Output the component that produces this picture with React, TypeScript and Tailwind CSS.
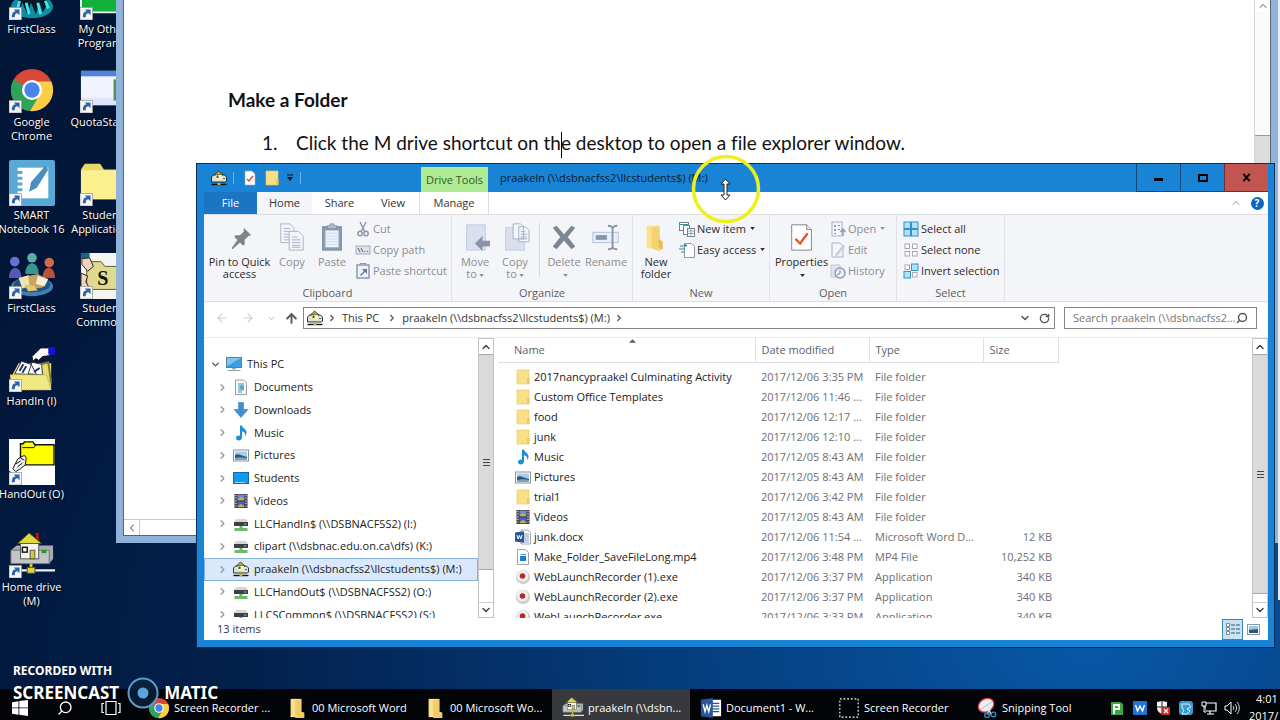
import React from 'react';
import { ChevronDown, ChevronRight, ChevronUp, ArrowLeft, ArrowRight, ArrowUp, RotateCw, Search } from 'lucide-react';

type IconName =
  | 'folder'
  | 'music'
  | 'pictures'
  | 'videos'
  | 'docx'
  | 'mp4'
  | 'exe'
  | 'pc'
  | 'documents'
  | 'downloads'
  | 'desktop'
  | 'netdrive'
  | 'house';

interface FileRow {
  name: string;
  date: string;
  type: string;
  size?: string;
  icon: IconName;
}

interface TreeRow {
  label: string;
  icon: IconName;
  selected?: boolean;
}

const files: FileRow[] = [
  { name: '2017nancypraakel Culminating Activity', date: '2017/12/06 3:35 PM', type: 'File folder', icon: 'folder' },
  { name: 'Custom Office Templates', date: '2017/12/06 11:46 ...', type: 'File folder', icon: 'folder' },
  { name: 'food', date: '2017/12/06 12:17 ...', type: 'File folder', icon: 'folder' },
  { name: 'junk', date: '2017/12/06 12:10 ...', type: 'File folder', icon: 'folder' },
  { name: 'Music', date: '2017/12/05 8:43 AM', type: 'File folder', icon: 'music' },
  { name: 'Pictures', date: '2017/12/05 8:43 AM', type: 'File folder', icon: 'pictures' },
  { name: 'trial1', date: '2017/12/06 3:42 PM', type: 'File folder', icon: 'folder' },
  { name: 'Videos', date: '2017/12/05 8:43 AM', type: 'File folder', icon: 'videos' },
  { name: 'junk.docx', date: '2017/12/06 11:54 ...', type: 'Microsoft Word D...', size: '12 KB', icon: 'docx' },
  { name: 'Make_Folder_SaveFileLong.mp4', date: '2017/12/06 3:48 PM', type: 'MP4 File', size: '10,252 KB', icon: 'mp4' },
  { name: 'WebLaunchRecorder (1).exe', date: '2017/12/06 3:37 PM', type: 'Application', size: '340 KB', icon: 'exe' },
  { name: 'WebLaunchRecorder (2).exe', date: '2017/12/06 3:37 PM', type: 'Application', size: '340 KB', icon: 'exe' },
  { name: 'WebLaunchRecorder.exe', date: '2017/12/06 3:33 PM', type: 'Application', size: '340 KB', icon: 'exe' },
];

const tree: TreeRow[] = [
  { label: 'Documents', icon: 'documents' },
  { label: 'Downloads', icon: 'downloads' },
  { label: 'Music', icon: 'music' },
  { label: 'Pictures', icon: 'pictures' },
  { label: 'Students', icon: 'desktop' },
  { label: 'Videos', icon: 'videos' },
  { label: 'LLCHandIn$ (\\\\DSBNACFSS2) (I:)', icon: 'netdrive' },
  { label: 'clipart (\\\\dsbnac.edu.on.ca\\dfs) (K:)', icon: 'netdrive' },
  { label: 'praakeln (\\\\dsbnacfss2\\llcstudents$) (M:)', icon: 'house', selected: true },
  { label: 'LLCHandOut$ (\\\\DSBNACFSS2) (O:)', icon: 'netdrive' },
  { label: 'LLCSCommon$ (\\\\DSBNACFSS2) (S:)', icon: 'netdrive' },
];

/* ---------- 16px icons ---------- */

const SmallIcon = ({ name }: { name: IconName }) => (
  <svg viewBox="0 0 16 16" className="w-4 h-4 shrink-0" aria-hidden="true">
    {name === 'folder' && (
      <>
        <path d="M2 1h12v14H2z" fill="#f9df86" stroke="#e6c766" strokeWidth="0.6" />
        <path d="M12 9h2.500v6H12z" fill="#ecca62" />
      </>
    )}
    {name === 'music' && (
      <path d="M7 0.500h2c0.300 2.500 4.500 3.500 4.500 7 0 1.800-0.800 2.800-1.500 3.500 0.800-3-1-4.300-3-4.800V12.500c0 1.800-1.600 3-3.300 3S3 14.500 3 13s1.500-2.700 4-2.300z" fill="#1c8fd8" />
    )}
    {name === 'pictures' && (
      <>
        <rect x="0.500" y="3" width="15" height="11" fill="#fff" stroke="#8e9299" />
        <rect x="2" y="4.500" width="12" height="8" fill="#a8cdea" />
        <path d="M2 8c3-2 5 0 12 2v2.500H2z" fill="#2c587c" />
        <path d="M2 11c4-1 8-1 12 0v1.500H2z" fill="#7fa3b8" />
      </>
    )}
    {name === 'videos' && (
      <>
        <rect x="1.500" y="1" width="13" height="14" fill="#3b3b45" />
        <rect x="4.500" y="1.500" width="7" height="6" fill="#7089c9" />
        <rect x="4.500" y="8.500" width="7" height="6" fill="#4d66b0" />
        <path d="M5 6l3-2 3 2v1H5zM5 13l3-2 3 2v1H5z" fill="#c9b04a" />
        <path d="M3 2v13M13 2v13" stroke="#e8e8e8" strokeWidth="1.200" strokeDasharray="1.200 1.400" />
      </>
    )}
    {name === 'docx' && (
      <>
        <path d="M6 1h7l2.500 2.500V15H6z" fill="#fff" stroke="#8a8f98" strokeWidth="0.800" />
        <path d="M9 5h5M9 7h5M9 9h5M9 11h5M9 13h5" stroke="#6b87b8" strokeWidth="0.800" />
        <path d="M0 3.500l9-1.200v11.400L0 12.500z" fill="#2b579a" />
        <path d="M2 6l1.200 4L4.500 6.500 5.800 10 7 6" fill="none" stroke="#fff" />
      </>
    )}
    {name === 'mp4' && (
      <>
        <path d="M2.500 0.500h8l3 3v12h-11z" fill="#fff" stroke="#8a8f98" strokeWidth="0.800" />
        <rect x="5" y="7" width="6" height="5" fill="#1d7fd1" />
        <path d="M5 5.500l6-0.800V6H5z" fill="#3b96dd" />
      </>
    )}
    {name === 'exe' && (
      <>
        <circle cx="8" cy="8" r="7.200" fill="#d0cdcd" />
        <circle cx="7.500" cy="6.800" r="5.800" fill="#f0eeee" />
        <circle cx="7.500" cy="7" r="2.800" fill="#b32a2e" />
      </>
    )}
    {name === 'pc' && (
      <>
        <rect x="0.500" y="1.500" width="15" height="10" fill="#3d9fdc" stroke="#5d7f98" />
        <path d="M1 2h14L1 10z" fill="#7cc6ef" />
        <path d="M6 12h4v1.500H6z" fill="#9bb2c0" />
        <path d="M1.500 14.500h13" stroke="#8fa7b5" />
      </>
    )}
    {name === 'documents' && (
      <>
        <path d="M2.500 1h8l3 3v11.500h-11z" fill="#f7fafc" stroke="#8a949e" strokeWidth="0.900" />
        <path d="M5 5h6M5 7h6M5 9h6M5 11h6M5 13h4" stroke="#4a93b6" />
        <rect x="7" y="6.500" width="4" height="4" fill="#5aa9cb" />
      </>
    )}
    {name === 'downloads' && <path d="M5.500 0.500h5v7h4.500L8 15.500 1 7.500h4.500z" fill="#3d8fd1" stroke="#2f79b8" strokeWidth="0.500" />}
    {name === 'desktop' && (
      <>
        <rect x="0.500" y="2.500" width="15" height="11" fill="#0c9bf0" stroke="#1468a8" />
        <path d="M2 12.500h10" stroke="#bfe4fb" strokeWidth="0.800" />
      </>
    )}
    {name === 'netdrive' && (
      <>
        <path d="M3 3h10l2 3H1z" fill="#d6d6d6" />
        <rect x="1" y="6" width="14" height="4" fill="#3c4044" />
        <rect x="11" y="7.500" width="2.500" height="1" fill="#56e07a" />
        <path d="M6.500 10h3v2h5v3h-13v-3h5z" fill="#6fb96f" />
      </>
    )}
    {name === 'house' && (
      <>
        <path d="M0.500 7l2-2h11l2 2v4l-1 1H0.500z" fill="#deded2" stroke="#222" strokeWidth="0.900" />
        <path d="M3.500 5L7.500 1l4.500 4z" fill="#b9b53a" stroke="#222" strokeWidth="0.800" />
        <rect x="4.500" y="5" width="6.500" height="4.500" fill="#f4f0c0" />
        <path d="M5.500 5.500h2v2.500h-2z" fill="#44602c" />
        <path d="M12 8.500h2" stroke="#2a8a3a" />
        <path d="M0.500 14.500h15" stroke="#111" strokeWidth="1.400" />
        <rect x="6.500" y="13" width="3" height="2" fill="#c8b820" />
      </>
    )}
  </svg>
);

/* ---------- desktop icons ---------- */

const ChromeLogo = () => (
  <>
    <circle cx="24" cy="24" r="22" fill="#d9483b" />
    <path d="M24 24L5 13A22 22 0 0 0 22 46l10-17z" fill="#2fa35a" />
    <path d="M24 24l8 5-10 17A22 22 0 0 0 44 15H24z" fill="#f8cf45" />
    <circle cx="24" cy="24" r="10.500" fill="#fff" />
    <circle cx="24" cy="24" r="8" fill="#4a83ec" />
  </>
);

const HouseDrive = () => (
  <>
    <path d="M2 19l6-5h38v14l-4 5H2z" fill="#a9abad" />
    <path d="M2 19h40v14H2z" fill="#c2c4c6" stroke="#6e7072" />
    <rect x="34" y="19" width="5" height="3" fill="#119c2c" />
    <path d="M28 1h3v8h-3z" fill="#b81818" />
    <path d="M9 12L21 1l13 11z" fill="#ded93c" stroke="#50501a" />
    <rect x="12" y="12" width="19" height="16" fill="#f4f4ee" stroke="#555" />
    <rect x="14" y="16" width="5" height="5" fill="#fff" stroke="#111" strokeWidth="1.500" />
    <rect x="22" y="19" width="5" height="9" fill="#d8c82c" stroke="#555" />
    <path d="M23 33v6" stroke="#d8c82c" strokeWidth="3" />
    <path d="M3 40h45" stroke="#f2f2f2" strokeWidth="2.500" />
    <rect x="19" y="37" width="8" height="6" fill="#e2d42c" stroke="#555" />
  </>
);

const People = () => (
  <>
    <ellipse cx="24" cy="35" rx="22" ry="10" fill="#3f7fb4" />
    <ellipse cx="24" cy="33" rx="19" ry="8" fill="#22527e" />
    <circle cx="6" cy="9" r="5" fill="#6b6fd0" />
    <path d="M0 26c0-14 13-14 13 0z" fill="#5558b8" />
    <circle cx="24" cy="5" r="5" fill="#58b0ac" />
    <path d="M17 22c0-15 14-15 14 0z" fill="#3c948f" />
    <circle cx="42" cy="10" r="5" fill="#cf6a4c" />
    <path d="M35 26c0-14 13-14 13 0z" fill="#b65238" />
    <path d="M10 26l11-3 3 11-10 3z" fill="#efe4b2" />
    <path d="M20 24l10-2 8 4-3 10-13 2z" fill="#c9a45c" />
    <path d="M30 24l11 3-4 8-9-3z" fill="#f3efdc" />
    <path d="M16 33l10 1 4 5-10 1z" fill="#e4c873" />
  </>
);

const desktopArt: Record<string, React.ReactNode> = {
  first: (
    <>
      <ellipse cx="24" cy="34" rx="22" ry="12" fill="#0d8fa0" />
      <path d="M8 10l6 5 5-5 5 5 5-5 5 5 6-5v22l-5 8-3-10-4 12-5-12-4 12-5-12-4 10z" fill="#071a26" />
      <path d="M18 30l3 12M30 30l3 12M11 28l-2 9M38 28l3 8" stroke="#4be3ef" strokeWidth="3" />
    </>
  ),
  green: <path d="M1 0h47v40H1z" fill="#13b13a" stroke="#e8f4e8" strokeWidth="2" />,
  chrome: <ChromeLogo />,
  quota: (
    <>
      <rect x="1" y="4" width="47" height="36" fill="#dfe5fa" />
      <rect x="1" y="4" width="47" height="6" fill="#4f83e0" />
      <path d="M1 10h47v22H1z" fill="#f1f3fd" />
      <rect x="35" y="13" width="13" height="22" fill="#5d8c5a" />
    </>
  ),
  smart: (
    <>
      <rect x="0" y="0" width="48" height="48" rx="2" fill="#59a9d6" />
      <path d="M9 8h32v32H9z" fill="#fff" />
      <path d="M8 13h6M8 19h6M8 25h6M8 31h6" stroke="#59a9d6" strokeWidth="3" />
      <path d="M38 6l3 4-12 19-8 4 2-10z" fill="#4a8fbd" />
    </>
  ),
  folder: (
    <>
      <path d="M1 10l4-6h16l4 6h23v31H1z" fill="#e9d864" />
      <path d="M1 12h47v29H1z" fill="#fbf08d" />
      <path d="M1 11.500h47" stroke="#fffbd2" />
    </>
  ),
  people: <People />,
  common: (
    <>
      <rect x="1" y="0" width="47" height="48" fill="#f4f4f0" />
      <path d="M7 13l5-4h10l4 5h22v24H7z" fill="#dfda8e" stroke="#5a5636" />
      <path d="M1 0h9v6H1z" fill="#17658c" />
      <path d="M2 6l8-1 4 9-6 5-6-7z" fill="#f0d3bd" stroke="#2a2018" />
      <path d="M1 21l7 3-2 6 4 7H1z" fill="#f0d3bd" stroke="#2a2018" />
      <text x="18" y="33" fontSize="21" fontWeight="bold" fontFamily="Liberation Serif, serif" fill="#111">S</text>
    </>
  ),
  handin: (
    <>
      <path d="M3 31l7-13h34v28H3z" fill="#e6dd72" />
      <path d="M6 29l7-13 10 3 6 11zM20 29l4-12 10 2 1 11z" fill="#fff" stroke="#333" />
      <path d="M11 26l4-7M14 28l4-7M26 27l6-4" stroke="#222a70" strokeWidth="2" />
      <path d="M33 19l8-2 3 22" fill="none" stroke="#807a30" strokeWidth="2" />
      <path d="M1 30h38l5 16H3z" fill="#f1e883" stroke="#a69d40" strokeDasharray="1 1" />
      <path d="M24 11l9-9h10v8l-8 1-4 4-3-2-3 3z" fill="#f8f8f8" stroke="#111" />
      <rect x="41" y="1" width="7" height="8" fill="#1212d8" />
    </>
  ),
  handout: (
    <>
      <rect x="0" y="0" width="48" height="48" fill="#fff" />
      <path d="M12 5h3l1-2h9l2 3h20v21H12z" fill="#ff0" stroke="#111" strokeWidth="1.500" />
      <path d="M14 9h12l2-3" fill="none" stroke="#111" />
      <path d="M16 17l-7 4-5 10 3 3 5-3 5-4 1-7z" fill="#eee" stroke="#111" />
      <path d="M7 26l5-3M9 29l5-4M12 20l4 2" stroke="#111" />
      <path d="M0 33l5 3-5 3z" fill="#1a1ac0" />
    </>
  ),
  house: <HouseDrive />,
};

const desktopIcons = [
  { art: 'first', label: 'FirstClass' },
  { art: 'green', label: 'My Other Programs' },
  { art: 'chrome', label: 'Google Chrome' },
  { art: 'quota', label: 'QuotaStatus' },
  { art: 'smart', label: 'SMART Notebook 16' },
  { art: 'folder', label: 'Student Applications' },
  { art: 'people', label: 'FirstClass' },
  { art: 'common', label: 'Student Commons' },
  { art: 'handin', label: 'HandIn (I)' },
  null,
  { art: 'handout', label: 'HandOut (O)' },
  null,
  { art: 'house', label: 'Home drive (M)' },
];

const DesktopIcons = () => (
  <div className="absolute left-0 top-0 -ml-1 -mt-[26px] grid grid-cols-[71px_71px] auto-rows-[93px]">
    {desktopIcons.map((item, i) =>
      item ? (
        <button key={i} className="flex flex-col items-center text-[11px] leading-[14px] text-white">
          <svg viewBox="0 0 48 48" className="w-[46px] h-[46px] shrink-0" aria-hidden="true">
            {desktopArt[item.art]}
            <rect x="0" y="35" width="13" height="13" fill="#f5f5f5" stroke="#9a9a9a" strokeWidth="0.800" />
            <path d="M3 45c0-4 1-6 4-6l-2-2h6v6l-2-2c-2 0-3 1-3 4z" fill="#2e62a8" />
          </svg>
          <span className="mt-[2px] [text-shadow:1px_1px_2px_#000]">{item.label}</span>
        </button>
      ) : (
        <div key={i} />
      )
    )}
  </div>
);

/* ---------- Word window behind the explorer ---------- */

const WordWindow = () => (
  <section className="absolute left-[116px] right-[2px] top-0 bottom-[177px] border-x-[7px] border-b-[7px] border-[#91b3da]">
    <div className="h-full flex flex-col border-x border-b border-[#5b6672] bg-white">
      <div className="flex-1 min-h-0 flex">
        <article className="flex-1 pl-[104px] pt-[88px] font-['Lato',sans-serif] text-[19px] leading-6 text-[#111] [font-variant-ligatures:none]">
          <h1 className="font-bold">Make a Folder</h1>
          <p className="mt-[19px] pl-[34px] flex">
            <span className="w-[34px]">1.</span>
            <span>
              Click the M drive shortcut on th<span className="inline-block w-px h-[26px] -mr-px align-middle bg-black" />e desktop to open a file explorer window.
            </span>
          </p>
        </article>
        <div className="w-4 flex flex-col border-l border-[#d5d5d5]">
          <button className="h-3 grid place-items-center text-[#555]" aria-label="Scroll up">
            <ChevronUp size={12} />
          </button>
          <div className="h-[124px] border-b border-[#999] bg-[#fbfbfb]" />
          <div className="h-12 bg-[#dcdcdc]" />
        </div>
      </div>
      <div className="h-4 flex border-t border-[#c8c8c8]">
        <button className="w-4 grid place-items-center border-r border-[#c8c8c8] text-[#444]" aria-label="Scroll left">
          <ChevronRight size={12} className="rotate-180" />
        </button>
      </div>
    </div>
  </section>
);

/* ---------- ribbon ---------- */

const bigArt: Record<string, React.ReactNode> = {
  pin: (
    <g fill="#808488">
      <path d="M20 6l8 8-3 1-4 4v5l-2 1-9-9 1-2h5l4-4z" />
      <path d="M14 18l3 3-9 8-1-1z" />
    </g>
  ),
  copy: (
    <g fill="#f3f5fa" stroke="#a9b2c3">
      <path d="M4 2h10l4 4v16H4z" />
      <path d="M7 7h7M7 10h8M7 13h9M7 16h9M7 19h9" />
      <path d="M13 10h10l5 5v15H13z" />
      <path d="M16 16h6M16 19h9M16 22h9M16 25h9M16 27h9" />
    </g>
  ),
  paste: (
    <g>
      <rect x="6" y="5" width="20" height="25" fill="#8a9cb5" stroke="#77879f" />
      <rect x="9" y="9" width="14" height="18" fill="#eef3fc" />
      <path d="M10 12h12M10 15h12M10 18h12M10 21h12M10 24h12" stroke="#cdd8ec" />
      <path d="M11 7V4h3V2h4v2h3v3z" fill="#b4bcc8" stroke="#8893a5" />
    </g>
  ),
  moveto: (
    <g>
      <path d="M7 3h20v27H7z" fill="#dadff0" stroke="#c5cce2" />
      <path d="M24 15l-8 8 8 8v-5h8v-6h-8z" fill="#8b93a5" />
    </g>
  ),
  copyto: (
    <g>
      <path d="M6 6h20v24H6z" fill="#dadff0" stroke="#c5cce2" />
      <path d="M14 2h8l3 3v13H14zM20 5h7l4 4v12H20z" fill="#f4f6fb" stroke="#a4aec2" />
      <path d="M22 10h5M22 13h7M22 16h7M22 18h7" stroke="#a4aec2" />
    </g>
  ),
  del: <path d="M4 6l4-2 8 9 8-9 4 2-8 10 8 10-4 3-8-9-8 9-4-3 8-10z" fill="#7d8794" />,
  rename: (
    <g>
      <rect x="2" y="11" width="27" height="11" fill="#e9effa" stroke="#b2c0d8" />
      <rect x="5" y="14" width="12" height="5" fill="#8394b0" />
      <path d="M18 4c4 0 5 2 5 3 0-1 2-3 5-3M23 7v20M18 29c4 0 5-1 5-3 0 2 2 3 5 3" fill="none" stroke="#8893a5" strokeWidth="2" />
    </g>
  ),
  newfolder: (
    <g>
      <path d="M6 4h13v24H6z" fill="#fbe08a" />
      <path d="M11 6l9-2v14l3 3v8l-4 2-8-3z" fill="#f5d271" />
      <path d="M19 18l4 3v8l-4-2z" fill="#e8bd54" />
    </g>
  ),
  props: (
    <g>
      <path d="M5 3h16l5 5v22H5z" fill="#fff" stroke="#7c8088" />
      <path d="M21 3v5h5" fill="#e8e8ee" stroke="#7c8088" />
      <path d="M9 18l5 5 8-11" fill="none" stroke="#e4552b" strokeWidth="2.500" />
    </g>
  ),
};

const smallArt: Record<string, React.ReactNode> = {
  cut: (
    <g fill="none" stroke="#8b95a8" strokeWidth="1.400">
      <path d="M5 1l5 10M11 1L6 11" />
      <circle cx="5" cy="12.500" r="2.200" />
      <circle cx="11" cy="12.500" r="2.200" />
    </g>
  ),
  path: (
    <g>
      <rect x="1" y="4" width="14" height="8" fill="#dce1ea" stroke="#a5adba" />
      <path d="M3 6l2 4M6 6l2 4M9.500 9.500h1M12 9.500h1" stroke="#586274" />
    </g>
  ),
  shortcut: (
    <g>
      <rect x="2" y="2" width="12" height="13" fill="#eef2f9" stroke="#8b9ab2" strokeWidth="1.500" />
      <path d="M5 2V0.500h6V2" stroke="#8b9ab2" fill="none" />
      <path d="M5 12l4-4-2-2h5v5l-2-2-4 4z" fill="#63779b" />
    </g>
  ),
  newitem: (
    <g fill="#fff" stroke="#6e8798">
      <rect x="0.500" y="1.500" width="9" height="8" />
      <path d="M0.500 3.500h9" stroke="#3c8c9a" />
      <rect x="4.500" y="4.500" width="6" height="9" />
      <rect x="8.500" y="7.500" width="7" height="8" />
      <path d="M8.500 10h7M8.500 12.500h7M12 8v7" strokeWidth="0.700" />
    </g>
  ),
  easy: (
    <g>
      <path d="M5.500 1.500h7l3 3v11h-10z" fill="#fff" stroke="#8a97a6" />
      <path d="M1 4h6M0 7h6M2 10h4M5 2l3 2" stroke="#2e8a9c" strokeWidth="1.200" />
    </g>
  ),
  open: (
    <g>
      <rect x="2" y="1" width="10" height="14" fill="#f2f5fb" stroke="#aab4c6" />
      <path d="M4 4h2v2H4zM4 8h2v2H4zM4 12h2v1H4zM8 4h2v1H8zM8 8h2v1H8z" fill="#8c9ab4" />
      <path d="M13 15V9M10.500 11L13 8l2.500 3" stroke="#8c9ab4" strokeWidth="1.500" fill="none" />
    </g>
  ),
  edit: (
    <g>
      <path d="M2 1h8l3 3v11H2z" fill="#f2f5fb" stroke="#aab4c6" />
      <path d="M5 13l8-10 2 1-8 10z" fill="#c2cada" />
    </g>
  ),
  history: (
    <g>
      <path d="M1 2h9v12H1z" fill="#dfe4f0" stroke="#bcc5d8" />
      <circle cx="10" cy="10" r="5" fill="#eef2f9" stroke="#8c9ab4" strokeWidth="1.500" />
      <path d="M10 7v3.500L7 12" stroke="#6f7f9b" fill="none" />
    </g>
  ),
  all: (
    <g fill="#b5e0f7" stroke="#2f93cc">
      <rect x="1" y="1" width="6.500" height="6.500" />
      <rect x="8.500" y="1" width="6.500" height="6.500" />
      <rect x="1" y="8.500" width="6.500" height="6.500" />
      <rect x="8.500" y="8.500" width="6.500" height="6.500" />
    </g>
  ),
  none: (
    <g fill="#fff" stroke="#a8a8ae">
      <rect x="2" y="2" width="4.500" height="4.500" />
      <rect x="9.500" y="2" width="4.500" height="4.500" />
      <rect x="2" y="9.500" width="4.500" height="4.500" />
      <rect x="9.500" y="9.500" width="4.500" height="4.500" />
    </g>
  ),
  invert: (
    <g fill="#b5e0f7" stroke="#2f93cc">
      <rect x="2" y="2" width="4.500" height="4.500" fill="#fff" stroke="#a8a8ae" />
      <rect x="8.500" y="1" width="6.500" height="6.500" />
      <rect x="1" y="8.500" width="6.500" height="6.500" />
      <rect x="9.500" y="9.500" width="4.500" height="4.500" fill="#fff" stroke="#a8a8ae" />
    </g>
  ),
};

const Caret = () => (
  <svg viewBox="0 0 6 4" className="inline-block w-[5px] h-[3px] ml-[2px] shrink-0" aria-hidden="true">
    <path d="M0 0h6L3 4z" fill="currentColor" />
  </svg>
);

interface RibbonButtonProps {
  art: string;
  label: string;
  width?: string;
  disabled?: boolean;
  caret?: boolean;
}

const BigButton = ({ art, label, width = 'w-10', disabled, caret }: RibbonButtonProps) => (
  <button className={`${width} shrink-0 flex flex-col items-center leading-3 ${disabled ? 'text-[#8c8c90]' : 'text-[#2a2a2e]'}`}>
    <svg viewBox="0 0 32 32" className="w-[30px] h-[30px] mt-[7px] mb-1 shrink-0" aria-hidden="true">
      {bigArt[art]}
    </svg>
    <span className="whitespace-pre-line">
      {label}
      {caret && <Caret />}
    </span>
  </button>
);

const SmallButton = ({ art, label, disabled, caret }: RibbonButtonProps) => (
  <button className={`h-[21px] flex items-center gap-[2px] whitespace-nowrap ${disabled ? 'text-[#8c8c90]' : 'text-[#2a2a2e]'}`}>
    <svg viewBox="0 0 16 16" className="w-4 h-4 shrink-0" aria-hidden="true">
      {smallArt[art]}
    </svg>
    {label}
    {caret && <Caret />}
  </button>
);

const Group = ({ title, width, children }: { title: string; width: string; children: React.ReactNode }) => (
  <div className={`${width} shrink-0 flex flex-col border-r border-[#e1e2e5]`}>
    <div className="flex-1 flex pl-[3px]">{children}</div>
    <div className="h-[15px] text-center text-[#5c5c62]">{title}</div>
  </div>
);

const Ribbon = () => (
  <div className="h-[88px] flex bg-[#f4f5f8] border-y border-[#dcdde0]">
    <Group title="Clipboard" width="w-[248px]">
      <BigButton art="pin" label="Pin to Quick access" width="w-[65px]" />
      <BigButton art="copy" label="Copy" disabled />
      <BigButton art="paste" label="Paste" disabled />
      <div className="pl-[3px] pt-[3px]">
        <SmallButton art="cut" label="Cut" disabled />
        <SmallButton art="path" label="Copy path" disabled />
        <SmallButton art="shortcut" label="Paste shortcut" disabled />
      </div>
    </Group>
    <Group title="Organize" width="w-[181px]">
      <BigButton art="moveto" label={'Move\nto'} disabled caret />
      <BigButton art="copyto" label={'Copy\nto'} disabled caret />
      <div className="w-px h-[54px] mt-2 mx-1 bg-[#d8d9dd]" />
      <BigButton art="del" label={'Delete\n'} disabled caret />
      <BigButton art="rename" label="Rename" width="w-11" disabled />
    </Group>
    <Group title="New" width="w-[137px]">
      <BigButton art="newfolder" label="New folder" />
      <div className="pl-[3px] pt-[3px]">
        <SmallButton art="newitem" label="New item" caret />
        <SmallButton art="easy" label="Easy access" caret />
      </div>
    </Group>
    <Group title="Open" width="w-[127px]">
      <BigButton art="props" label={'Properties\n'} width="w-[57px]" caret />
      <div className="pt-[3px]">
        <SmallButton art="open" label="Open" disabled caret />
        <SmallButton art="edit" label="Edit" disabled />
        <SmallButton art="history" label="History" disabled />
      </div>
    </Group>
    <Group title="Select" width="w-[108px]">
      <div className="pl-[3px] pt-[3px]">
        <SmallButton art="all" label="Select all" />
        <SmallButton art="none" label="Select none" />
        <SmallButton art="invert" label="Invert selection" />
      </div>
    </Group>
  </div>
);

/* ---------- explorer ---------- */

const TitleBar = () => (
  <header className="h-7 flex items-center text-[#0a1a2c]">
    <div className="w-[217px] pl-[7px] flex items-center gap-[6px]">
      <SmallIcon name="house" />
      <span className="w-px h-3 mr-[2px] bg-[#6bb0e8]" />
      <svg viewBox="0 0 16 16" className="w-4 h-4" aria-hidden="true">
        <path d="M3 1h7l3 3v11H3z" fill="#fff" stroke="#a9a9b0" strokeWidth="0.600" />
        <path d="M5 9l2 2 4-5" fill="none" stroke="#dd4a35" strokeWidth="1.500" />
      </svg>
      <SmallIcon name="folder" />
      <svg viewBox="0 0 8 8" className="w-2 h-2" aria-hidden="true">
        <path d="M1 1h6" stroke="#111" />
        <path d="M1 3h6L4 7z" fill="#111" />
      </svg>
      <span className="w-px h-3 bg-[#6bb0e8]" />
    </div>
    <div className="w-[67px] h-[25px] self-end grid place-items-center bg-[#aeea92] text-[#37562c]">Drive Tools</div>
    <h2 className="flex-1 pl-3">praakeln (\\dsbnacfss2\llcstudents$) (M:)</h2>
    <button className="w-11 h-7 grid place-items-center border-l border-b border-[#0f4778]" aria-label="Minimize">
      <span className="w-[9px] h-[3px] mt-[3px] bg-black" />
    </button>
    <button className="w-11 h-7 grid place-items-center border-l border-b border-[#0f4778]" aria-label="Maximize">
      <span className="w-[10px] h-2 border-2 border-black" />
    </button>
    <button className="w-11 h-7 grid place-items-center border-l border-b border-[#6d3030] bg-[#c35550]" aria-label="Close">
      <svg viewBox="0 0 10 10" className="w-[9px] h-[9px]" aria-hidden="true">
        <path d="M1.500 1l7 8M8.500 1l-7 8" stroke="#000" strokeWidth="2.200" />
      </svg>
    </button>
  </header>
);

const Tabs = () => (
  <nav className="h-[22px] flex bg-white text-[#333]">
    <button className="w-[53px] bg-[#1b74c4] text-white">File</button>
    <button className="w-[55px] bg-[#f4f5f8]">Home</button>
    <button className="w-[55px]">Share</button>
    <button className="w-[52px]">View</button>
    <button className="w-[70px] border-x border-[#dcdde0]">Manage</button>
    <div className="flex-1" />
    <button className="w-6 grid place-items-center text-[#999]" aria-label="Collapse ribbon">
      <ChevronUp size={12} />
    </button>
    <button className="w-[18px] mr-[2px] grid place-items-center" aria-label="Help">
      <span className="w-[13px] h-[13px] rounded-full bg-[#0c66bd] text-white text-[10px] leading-[13px] font-bold">?</span>
    </button>
  </nav>
);

const AddressBar = () => (
  <div className="h-[35px] flex items-start gap-[9px] pt-[5px] pr-[11px] bg-white text-[#333]">
    <div className="flex-1 h-[22px] flex items-center">
      <div className="w-[99px] flex items-center pl-[11px]">
        <button className="w-[26px]" aria-label="Back"><ArrowLeft size={14} color="#cfcfcf" /></button>
        <button className="w-[26px]" aria-label="Forward"><ArrowRight size={14} color="#cfcfcf" /></button>
        <button className="w-[17px]" aria-label="Recent locations"><ChevronDown size={9} color="#9a9a9a" /></button>
        <button aria-label="Up"><ArrowUp size={15} color="#555" strokeWidth={3} /></button>
      </div>
      <div className="flex-1 h-full flex items-center border border-[#858585] pl-[3px]">
        <SmallIcon name="house" />
        <ChevronRight size={10} className="ml-1" color="#555" strokeWidth={3} />
        <button className="ml-[5px]">This PC</button>
        <ChevronRight size={10} className="ml-2" color="#555" strokeWidth={3} />
        <button className="ml-[5px]">praakeln (\\dsbnacfss2\llcstudents$) (M:)</button>
        <ChevronRight size={10} className="ml-1" color="#555" strokeWidth={3} />
        <div className="flex-1" />
        <button aria-label="Previous locations"><ChevronDown size={12} color="#555" strokeWidth={3} /></button>
        <button className="ml-2 mr-1" aria-label="Refresh"><RotateCw size={11} color="#555" strokeWidth={3} /></button>
      </div>
    </div>
    <label className="w-[193px] h-[22px] flex items-center border border-[#858585] px-2">
      <input
        type="text"
        aria-label="Search"
        placeholder="Search praakeln (\\dsbnacfss2..."
        className="flex-1 min-w-0 outline-none placeholder:text-[#767676]"
      />
      <Search size={12} color="#555" strokeWidth={3} className="-scale-x-100" />
    </label>
  </div>
);

const Scrollbar = ({ rest }: { rest: string }) => (
  <div className="w-4 shrink-0 flex flex-col border border-[#c4c4c4] bg-white text-[#444]">
    <button className="h-[15px] shrink-0 grid place-items-center" aria-label="Scroll up">
      <ChevronUp size={12} strokeWidth={3} />
    </button>
    <div className="flex-1 flex flex-col items-center justify-center gap-[2px] bg-[#dadada] border-y border-[#a8a8a8]">
      <span className="w-[7px] h-px bg-[#444]" />
      <span className="w-[7px] h-px bg-[#444]" />
      <span className="w-[7px] h-px bg-[#444]" />
    </div>
    <div className={rest} />
    <button className="h-[15px] shrink-0 grid place-items-center border-t border-[#d0d0d0]" aria-label="Scroll down">
      <ChevronDown size={12} strokeWidth={3} />
    </button>
  </div>
);

const TreePane = () => (
  <div className="w-[274px] shrink-0 overflow-hidden pt-[15px]">
    <ul className="h-[273px] grid grid-rows-12 text-[#222]">
      <li className="flex items-center gap-[5px] pl-[6px]">
        <ChevronDown size={11} color="#555" strokeWidth={3} />
        <SmallIcon name="pc" />
        This PC
      </li>
      {tree.map((row) => (
        <li
          key={row.label}
          className={`flex items-center gap-[5px] pl-3 border ${row.selected ? 'bg-[#d9e8fb] border-[#8ab0de]' : 'border-transparent'}`}
        >
          <ChevronRight size={11} color="#999" strokeWidth={3} />
          <SmallIcon name={row.icon} />
          <span className="whitespace-nowrap">{row.label}</span>
        </li>
      ))}
    </ul>
  </div>
);

const FilePane = () => (
  <div className="flex-1 overflow-hidden ml-1">
    <table className="w-[560px] table-fixed border-collapse text-[#6e6e72]">
      <thead>
        <tr className="h-6 text-left border-b border-[#dfe0e3] text-[#5a6070]">
          <th className="relative w-[257px] pl-4 font-normal border-r border-[#dfe0e3]">
            Name
            <svg viewBox="0 0 8 4" className="absolute left-[131px] top-px w-[7px] h-1" aria-hidden="true">
              <path d="M4 0l4 4H0z" fill="#555b66" />
            </svg>
          </th>
          <th className="w-[114px] pl-[6px] font-normal border-r border-[#dfe0e3]">Date modified</th>
          <th className="w-[114px] pl-[6px] font-normal border-r border-[#dfe0e3]">Type</th>
          <th className="w-[75px] pl-[6px] font-normal border-r border-[#dfe0e3]">Size</th>
        </tr>
      </thead>
      <tbody>
        <tr className="h-[5px]" />
        {files.map((file) => (
          <tr key={file.name} className="h-5 whitespace-nowrap">
            <td className="pl-[17px] text-[#1a1a1a]">
              <div className="flex items-center gap-[3px]">
                <SmallIcon name={file.icon} />
                {file.name}
              </div>
            </td>
            <td className="pl-[6px]">{file.date}</td>
            <td className="pl-[6px]">{file.type}</td>
            <td className="pr-[6px] text-right">{file.size}</td>
          </tr>
        ))}
      </tbody>
    </table>
  </div>
);

const ExplorerWindow = () => (
  <section className="absolute left-[196px] right-[5px] top-[163px] bottom-[72px] flex flex-col border border-[#0d2f55] bg-[#1983d6] pl-[7px] pr-[6px] pb-[7px] text-[11px] leading-[14px]">
    <TitleBar />
    <Tabs />
    <Ribbon />
    <AddressBar />
    <div className="flex-1 min-h-0 flex bg-white border-t border-[#ececee]">
      <TreePane />
      <Scrollbar rest="h-8 shrink-0" />
      <FilePane />
      <Scrollbar rest="h-2 shrink-0" />
    </div>
    <footer className="h-[22px] flex items-center bg-white pl-[13px] pr-1 text-[#2d3d58]">
      <span className="flex-1">13 items</span>
      <button className="w-[21px] h-[21px] grid place-items-center border border-[#3c87b0] bg-[#c6e4f5]" aria-label="Details view">
        <svg viewBox="0 0 16 14" className="w-4 h-[14px]" aria-hidden="true">
          <path d="M1.500 1.500h3v3h-3zM1.500 5.500h3v3h-3zM1.500 9.500h3v3h-3z" fill="#fff" stroke="#7c8790" />
          <path d="M6 3h4M11 3h4M6 7h4M11 7h4M6 11h4M11 11h4" stroke="#44525e" />
        </svg>
      </button>
      <button className="w-[21px] h-[21px] grid place-items-center" aria-label="Large icons view">
        <svg viewBox="0 0 13 11" className="w-[13px] h-[11px]" aria-hidden="true">
          <rect x="0.500" y="0.500" width="12" height="10" fill="#fff" stroke="#8b98a5" />
          <rect x="2" y="2" width="9" height="7" fill="#9cc6ea" />
          <path d="M2 6l9-1v4H2z" fill="#2a5470" />
        </svg>
      </button>
    </footer>
  </section>
);

/* ---------- taskbar ---------- */

const TaskFolder = () => (
  <>
    <path d="M5 2h11v20H5z" fill="#fbe08a" />
    <path d="M10 4l7-2v14l3 1v6H10z" fill="#f2cd67" />
  </>
);

const tasks: { label: string; art: React.ReactNode; active?: boolean }[] = [
  { label: 'Screen Recorder ...', art: <g transform="scale(0.5)"><ChromeLogo /></g> },
  { label: '00 Microsoft Word', art: <TaskFolder /> },
  { label: '00 Microsoft Wo...', art: <TaskFolder /> },
  { label: 'praakeln (\\\\dsbn...', art: <g transform="scale(0.5)"><HouseDrive /></g>, active: true },
  {
    label: 'Document1 - W...',
    art: (
      <>
        <path d="M11 3h12v18H11z" fill="#fff" />
        <path d="M13 7h8M13 10h8M13 13h8M13 16h8" stroke="#2b579a" strokeWidth="1.200" />
        <path d="M1 3l13-2v22L1 21z" fill="#2b579a" />
        <path d="M3.500 8l2 8 2-7 2 7 2-8" fill="none" stroke="#fff" strokeWidth="1.500" />
      </>
    ),
  },
  { label: 'Screen Recorder', art: <rect x="2" y="2" width="20" height="20" fill="none" stroke="#fff" strokeWidth="1.200" strokeDasharray="2 2" /> },
  {
    label: 'Snipping Tool',
    art: (
      <>
        <ellipse cx="11" cy="9" rx="9" ry="7" transform="rotate(-30 11 9)" fill="#f1eeee" stroke="#c8343c" strokeWidth="1.500" />
        <path d="M4 14l14-9" stroke="#c3b0b4" />
        <path d="M13 9l3 10M17 10l-5 9" stroke="#d8e4ee" strokeWidth="1.500" />
        <circle cx="12" cy="20" r="2.500" fill="none" stroke="#2e8fc9" strokeWidth="1.500" />
        <circle cx="19" cy="19" r="2.500" fill="none" stroke="#2e8fc9" strokeWidth="1.500" />
      </>
    ),
  },
];

const Tray = () => (
  <div className="flex items-center gap-[7px] shrink-0">
    <svg viewBox="0 0 16 16" className="w-4 h-4" aria-hidden="true">
      <path d="M2 2h9l3 2v11H2z" fill="#3ba549" />
      <path d="M5 14V5h5v4H6" fill="none" stroke="#fff" strokeWidth="1.800" />
    </svg>
    <svg viewBox="0 0 16 16" className="w-4 h-4" aria-hidden="true">
      <path d="M1 1h14v14H1z" fill="#2172d8" />
      <path d="M3.500 5l2 6 2.500-5 2.500 5 2-6" fill="none" stroke="#fff" strokeWidth="1.400" />
    </svg>
    <svg viewBox="0 0 16 16" className="w-4 h-4" aria-hidden="true">
      <path d="M2 2l5-1 5 1v6c0 3-3 5-5 6-3-1-5-3-5-6z" fill="#f4f4f4" />
      <path d="M7 1v13M2 7h10" stroke="#222" />
      <rect x="7" y="7" width="8" height="8" fill="#d42b26" />
      <path d="M9 9l4 4M13 9l-4 4" stroke="#fff" strokeWidth="1.300" />
    </svg>
    <svg viewBox="0 0 16 16" className="w-4 h-4" aria-hidden="true">
      <rect x="1" y="1" width="14" height="14" rx="3" fill="#3a9ad2" />
      <path d="M4 4h7l2 3-4 2 3 2-3 3H4l2-4-2-2z" fill="none" stroke="#d9effa" />
    </svg>
    <svg viewBox="0 0 16 16" className="w-4 h-4" aria-hidden="true">
      <path d="M4 3h11v8H4zM9 11v3M6 14h7" fill="none" stroke="#fff" strokeWidth="1.200" />
      <path d="M1 2h4v4H1zM3 6v6h2" fill="#000" stroke="#fff" />
    </svg>
    <svg viewBox="0 0 16 16" className="w-4 h-4" aria-hidden="true">
      <path d="M1 6h2l4-4v12l-4-4H1z" fill="none" stroke="#fff" />
      <path d="M9 6c1 1 1 3 0 4M11 4c2 2 2 6 0 8M13 2c3 3 3 9 0 12" fill="none" stroke="#ddd" />
    </svg>
  </div>
);

const Taskbar = () => (
  <footer className="absolute inset-x-0 bottom-0 h-[31px] flex overflow-hidden bg-[#020408] text-[11px] leading-[14px] text-white">
    <div className="w-[138px] shrink-0 flex items-center pt-[6px]">
      <button className="ml-3" aria-label="Start">
        <svg viewBox="0 0 16 16" className="w-4 h-4" aria-hidden="true">
          <path d="M0 2.200l6.500-1v6.300H0zM7.300 1.100L16 0v7.500H7.300zM0 8.300h6.500v6.400L0 13.800zM7.300 8.300H16V16l-8.700-1.200z" fill="#fff" />
        </svg>
      </button>
      <button className="ml-[29px]" aria-label="Search Windows">
        <Search size={16} strokeWidth={2} className="-scale-x-100" />
      </button>
      <button className="ml-7" aria-label="Task view">
        <svg viewBox="0 0 20 16" className="w-5 h-4" aria-hidden="true">
          <path d="M5 1.500h10v13H5zM3 3.500H1v9h2M17 3.500h2v9h-2" fill="none" stroke="#fff" strokeWidth="1.200" />
        </svg>
      </button>
    </div>
    {tasks.map((task) => (
      <button
        key={task.label}
        className={`w-[138px] shrink-0 flex items-center gap-1 pl-[10px] pt-[6px] whitespace-nowrap ${task.active ? 'bg-[#37393c]' : ''}`}
      >
        <svg viewBox="0 0 24 24" className="w-[22px] h-[22px] shrink-0" aria-hidden="true">
          {task.art}
        </svg>
        {task.label}
      </button>
    ))}
    <div className="flex-1 flex justify-end items-center gap-[9px]">
      <div className="pt-[6px]">
        <Tray />
      </div>
      <div className="w-[31px] h-full pt-px leading-[17px]">
        <div className="pl-[7px]">4:01</div>
        <div>2017/</div>
      </div>
    </div>
  </footer>
);

const Watermark = () => (
  <div className="absolute left-[13px] bottom-[11px] font-['Noto_Sans',sans-serif] font-bold text-white">
    <div className="text-[12px] leading-3">RECORDED WITH</div>
    <div className="flex items-center text-[17px] leading-4">
      SCREENCAST
      <svg viewBox="0 0 32 32" className="w-8 h-8 ml-2 mr-[5px]" aria-hidden="true">
        <circle cx="16" cy="16" r="14.500" fill="#0d2238" fillOpacity="0.800" stroke="#5b9bd0" strokeWidth="2" />
        <circle cx="16" cy="16" r="5.500" fill="#5ba3e0" />
      </svg>
      MATIC
    </div>
  </div>
);

const Pointer = () => (
  <svg viewBox="0 0 70 70" className="absolute left-[691px] top-[154px] w-[70px] h-[70px] pointer-events-none" aria-hidden="true">
    <circle cx="35" cy="35" r="32.500" fill="none" stroke="#eef01c" strokeWidth="3.500" />
    <path d="M34.500 25l4.500 5h-3v11h3l-4.500 5-4.500-5h3V30h-3z" fill="#fff" stroke="#222" />
  </svg>
);

export default function App() {
  return (
    <main className="relative h-screen overflow-hidden bg-[#03163a] bg-[radial-gradient(ellipse_at_85%_90%,#0858a6_0%,#053f80_25%,#03204c_55%,#021638_80%)] font-['Open_Sans',sans-serif]">
      <DesktopIcons />
      <WordWindow />
      <ExplorerWindow />
      <Taskbar />
      <Watermark />
      <Pointer />
      <div className="absolute right-0 top-0 w-[2px] h-[600px] bg-[#e8ecf0]" />
    </main>
  );
}
